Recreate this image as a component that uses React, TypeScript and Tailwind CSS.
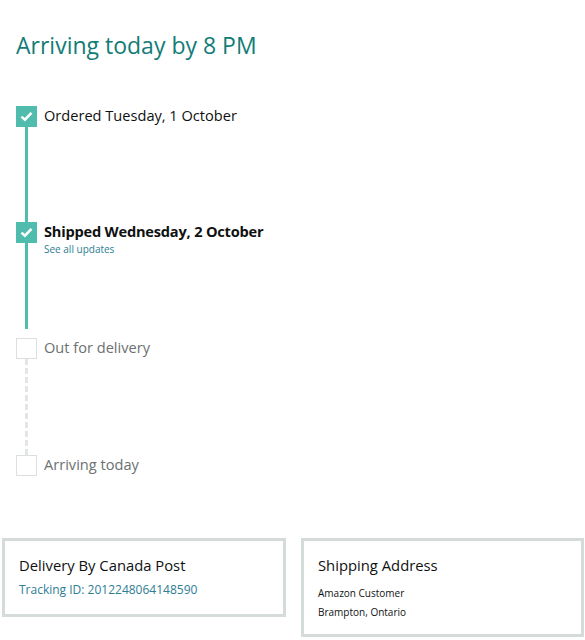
export default function App() {
  const font = { fontFamily: '"Open Sans", "Noto Sans", sans-serif' };
  const check = (
    <svg width="13" height="11" viewBox="0 0 13 11" fill="none">
      <path d="M1.5 5.6L4.9 8.6L11.5 1.8" stroke="white" strokeWidth="2.6" />
    </svg>
  );
  return (
    <main className="w-[585px] h-[640px] bg-white text-[#0f1111]" style={font}>
      <h1 className="pl-4 pt-[29px] text-[23px] leading-[32px] text-[#137c77]">
        Arriving today by 8 PM
      </h1>

      <div className="mt-[45px] pl-4">
        {/* Ordered */}
        <div className="flex">
          <div className="flex w-[21px] flex-col items-center">
            <div className="flex h-[21px] w-[21px] items-center justify-center bg-[#4fbcae]">{check}</div>
            <div className="h-[95px] w-[3px] bg-[#4fbcae]" />
          </div>
          <p className="-mt-px ml-[7px] text-[14.6px] leading-[21px]">Ordered Tuesday, 1 October</p>
        </div>

        {/* Shipped */}
        <div className="flex">
          <div className="flex w-[21px] flex-col items-center">
            <div className="flex h-[21px] w-[21px] items-center justify-center bg-[#4fbcae]">{check}</div>
            <div className="h-[86px] w-[3px] bg-[#4fbcae]" />
            <div className="h-[9px]" />
          </div>
          <div className="-mt-px ml-[7px]">
            <p className="text-[14.6px] font-bold leading-[21px] tracking-[-0.2px]">Shipped Wednesday, 2 October</p>
            <a className="block text-[10px] leading-[14px] text-[#2d7d93]">See all updates</a>
          </div>
        </div>

        {/* Out for delivery */}
        <div className="flex">
          <div className="flex w-[21px] flex-col items-center">
            <div className="h-[21px] w-[21px] border border-[#dcdfdf]" />
            <div className="h-[96px] w-0 border-l-[3px] border-dashed border-[#e3e6e6]" />
          </div>
          <p className="-mt-px ml-[7px] text-[14.6px] leading-[21px] text-[#6b7070]">Out for delivery</p>
        </div>

        {/* Arriving today */}
        <div className="flex">
          <div className="h-[21px] w-[21px] border border-[#dcdfdf]" />
          <p className="-mt-px ml-[7px] text-[14.6px] leading-[21px] text-[#6b7070]">Arriving today</p>
        </div>
      </div>

      <div className="mt-[62px] flex items-start gap-[15px] pl-[2px]">
        <div className="h-[79px] w-[284px] border-[3px] border-[#d5dbdb] px-[14px] pt-[14px]">
          <p className="text-[14.8px] leading-[21px]">Delivery By Canada Post</p>
          <p className="mt-[6px] text-[12px] leading-[16px] text-[#2d7d93]">Tracking ID: 2012248064148590</p>
        </div>
        <div className="h-[99px] w-[283px] border-[3px] border-[#d5dbdb] px-[14px] pt-[14px]">
          <p className="text-[14.8px] leading-[21px]">Shipping Address</p>
          <p className="mt-[10px] text-[10px] leading-[14px]">Amazon Customer</p>
          <p className="mt-[5px] text-[10px] leading-[14px]">Brampton, Ontario</p>
        </div>
      </div>
    </main>
  );
}
